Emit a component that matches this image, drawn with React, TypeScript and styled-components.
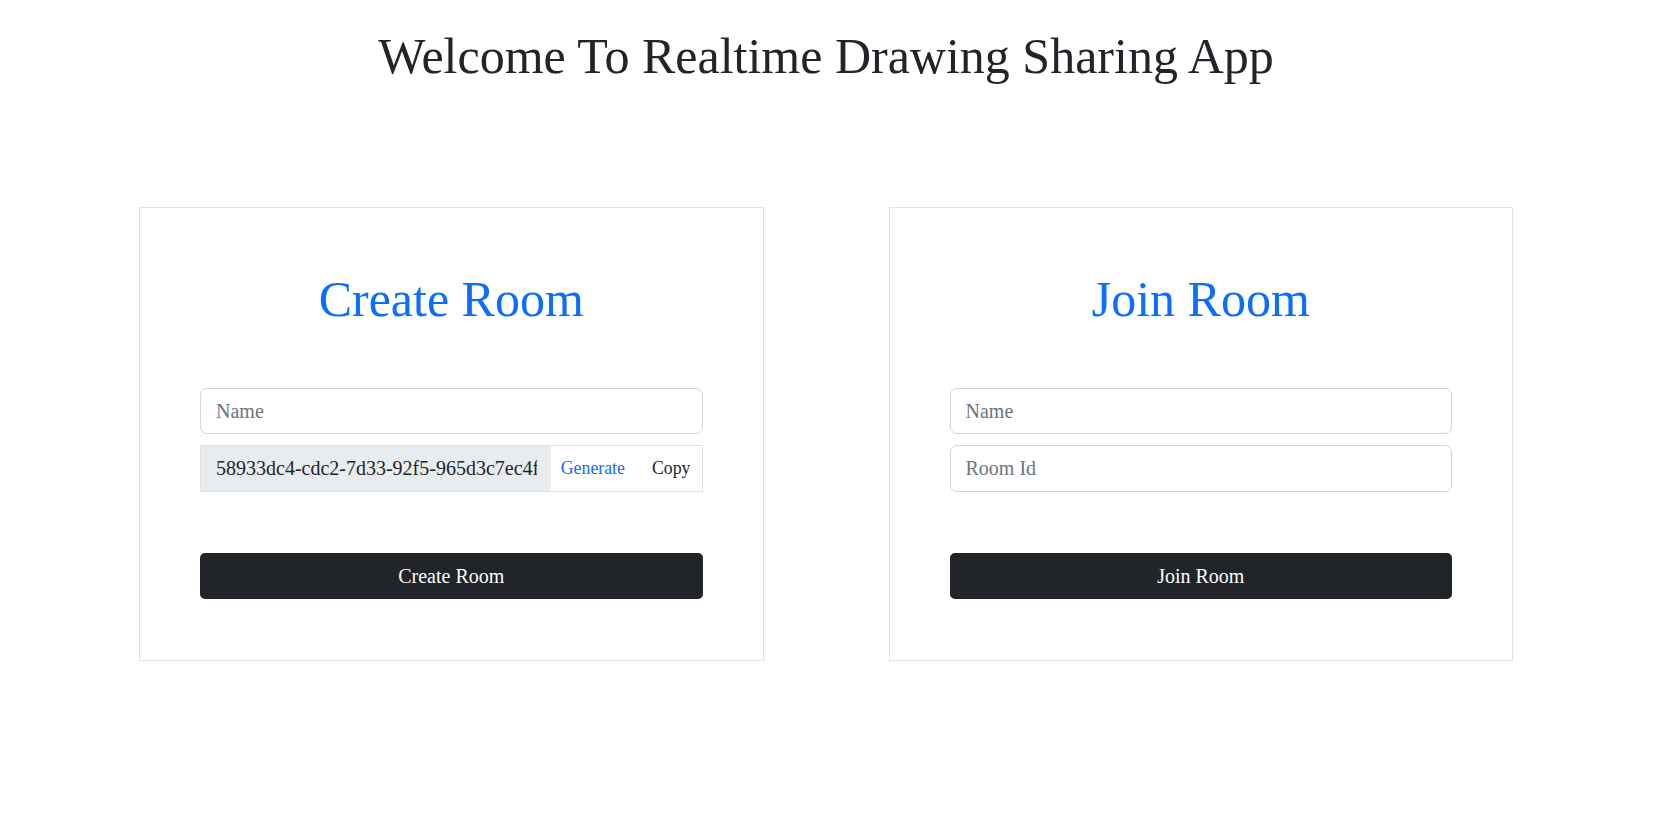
import * as React from "react";
import styled, { createGlobalStyle } from "styled-components";

const GlobalStyle = createGlobalStyle`
  html, body {
    margin: 0;
    padding: 0;
    background: #ffffff;
  }
  body {
    font-family: "Liberation Serif", "Times New Roman", serif;
    color: #212529;
  }
  * {
    box-sizing: border-box;
  }
`;

const Page = styled.div`
  padding: 26px 20px 0 0;
`;

const Title = styled.h1`
  margin: 0;
  font-size: 50px;
  font-weight: 400;
  line-height: 60px;
  text-align: center;
  color: #212529;
`;

const CardRow = styled.div`
  display: flex;
  gap: 125px;
  padding: 0 139px;
  margin-top: 121px;
`;

const Card = styled.div`
  flex: 1;
  border: 1px solid #dee2e6;
  padding: 61px 60px 61px;
  display: flex;
  flex-direction: column;
`;

const CardTitle = styled.h2`
  margin: 0 0 59px;
  font-size: 50px;
  font-weight: 400;
  line-height: 60px;
  text-align: center;
  color: #0d6efd;
`;

const Field = styled.input<{ $tall?: boolean }>`
  display: block;
  width: 100%;
  height: ${(p) => (p.$tall ? "47px" : "46px")};
  padding: 0 15px;
  font-family: inherit;
  font-size: 20px;
  color: #212529;
  background: #ffffff;
  border: 1px solid #ced4da;
  border-radius: 7px;
  outline: none;

  &::placeholder {
    color: #6c757d;
  }
`;

const Stack = styled.div`
  display: flex;
  flex-direction: column;
  gap: 11px;
`;

const Group = styled.div`
  display: flex;
  height: 47px;
  border: 1px solid #dee2e6;
`;

const ReadOnlyField = styled.input`
  flex: 1;
  min-width: 0;
  height: 100%;
  padding: 0 14px 0 15px;
  font-family: inherit;
  font-size: 20px;
  color: #212529;
  background: #e9ecef;
  border: none;
  outline: none;
`;

const GroupButton = styled.button<{ $tone: "link" | "plain" }>`
  padding: ${(p) => (p.$tone === "link" ? "0 13px 0 10px" : "0 11px 0 14px")};
  font-family: inherit;
  font-size: 17.8px;
  background: #ffffff;
  border: none;
  cursor: pointer;
  color: ${(p) => (p.$tone === "link" ? "#0d6efd" : "#212529")};
`;

const SubmitButton = styled.button`
  margin-top: 61px;
  width: 100%;
  height: 46px;
  font-family: inherit;
  font-size: 20px;
  color: #ffffff;
  background: #212529;
  border: none;
  border-radius: 5px;
  cursor: pointer;
`;

export default function App() {
  const [roomId, setRoomId] = React.useState(
    "58933dc4-cdc2-7d33-92f5-965d3c7ec4fa"
  );

  const generate = () => {
    const hex = () => Math.floor(Math.random() * 16).toString(16);
    const part = (n: number) => Array.from({ length: n }, hex).join("");
    setRoomId(`${part(8)}-${part(4)}-${part(4)}-${part(4)}-${part(12)}`);
  };

  return (
    <Page>
      <GlobalStyle />
      <Title>Welcome To Realtime Drawing Sharing App</Title>
      <CardRow>
        <Card>
          <CardTitle>Create Room</CardTitle>
          <Stack>
            <Field type="text" placeholder="Name" />
            <Group>
              <ReadOnlyField type="text" value={roomId} readOnly />
              <GroupButton $tone="link" onClick={generate}>
                Generate
              </GroupButton>
              <GroupButton $tone="plain">Copy</GroupButton>
            </Group>
          </Stack>
          <SubmitButton>Create Room</SubmitButton>
        </Card>
        <Card>
          <CardTitle>Join Room</CardTitle>
          <Stack>
            <Field type="text" placeholder="Name" />
            <Field type="text" placeholder="Room Id" $tall />
          </Stack>
          <SubmitButton>Join Room</SubmitButton>
        </Card>
      </CardRow>
    </Page>
  );
}
